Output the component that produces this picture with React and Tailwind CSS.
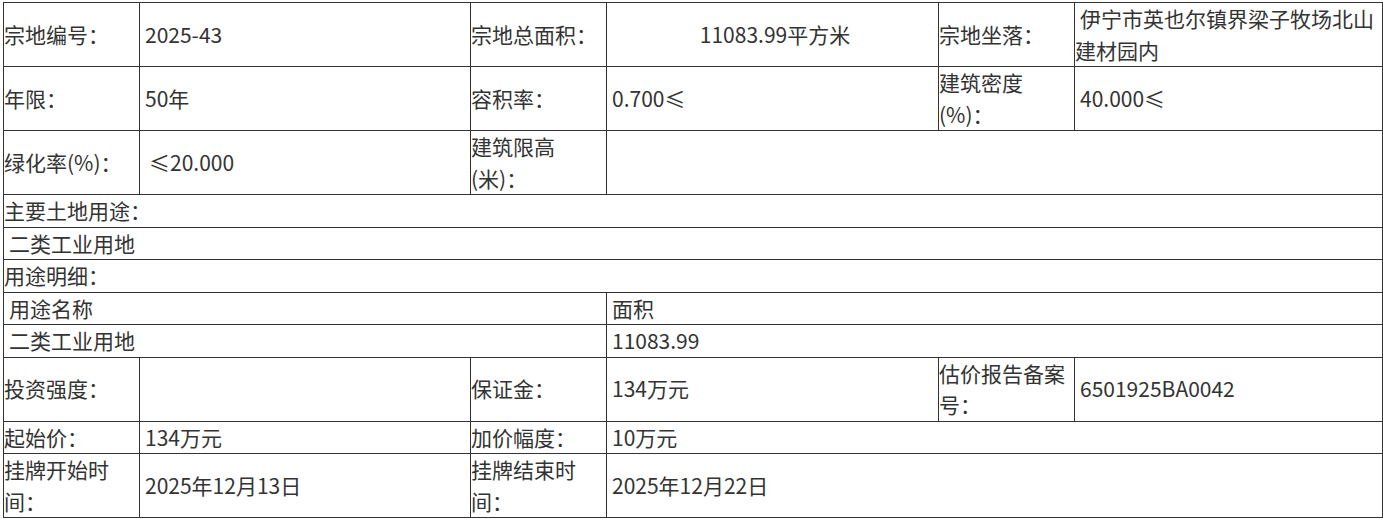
export default function App() {
  const L = "border border-[#333] p-0 align-middle text-left";
  const V = "border border-[#333] p-0 pl-[5px] align-middle text-left";
  return (
    <div className="bg-white w-[1383px] h-[519px] pl-[3px] pt-[2px] text-[#333] text-[21px] leading-[1.5]" style={{ fontFamily: '"Noto Sans CJK SC", "Noto Sans", sans-serif' }}>
      <table className="table-fixed border-collapse w-[1379px]">
        <colgroup>
          <col className="w-[136px]" />
          <col className="w-[331px]" />
          <col className="w-[136px]" />
          <col className="w-[332px]" />
          <col className="w-[136px]" />
          <col className="w-[308px]" />
        </colgroup>
        <tbody>
          <tr>
            <td className={L}>宗地编号：</td>
            <td className={V}>2025-43</td>
            <td className={L}>宗地总面积：</td>
            <td className="border border-[#333] p-0 pl-[5px] align-middle text-center">11083.99平方米</td>
            <td className={L}>宗地坐落：</td>
            <td className="border border-[#333] p-0 indent-[5px] align-middle text-left">伊宁市英也尔镇界梁子牧场北山建材园内</td>
          </tr>
          <tr>
            <td className={L}>年限：</td>
            <td className={V}>50年</td>
            <td className={L}>容积率：</td>
            <td className={V}>0.700≤</td>
            <td className={L}>建筑密度(%)：</td>
            <td className={V}>40.000≤</td>
          </tr>
          <tr>
            <td className={L}>绿化率(%)：</td>
            <td className="border border-[#333] p-0 pl-[9px] align-middle text-left">≤20.000</td>
            <td className={L}>建筑限高(米)：</td>
            <td className={V} colSpan={3}></td>
          </tr>
          <tr>
            <td className={L} colSpan={6}>主要土地用途：</td>
          </tr>
          <tr>
            <td className={V} colSpan={6}>二类工业用地</td>
          </tr>
          <tr>
            <td className={L} colSpan={6}>用途明细：</td>
          </tr>
          <tr>
            <td className={V} colSpan={3}>用途名称</td>
            <td className={V} colSpan={3}>面积</td>
          </tr>
          <tr>
            <td className={V} colSpan={3}>二类工业用地</td>
            <td className={V} colSpan={3}>11083.99</td>
          </tr>
          <tr>
            <td className={L}>投资强度：</td>
            <td className={V}></td>
            <td className={L}>保证金：</td>
            <td className={V}>134万元</td>
            <td className={L}>估价报告备案号：</td>
            <td className={V}>6501925BA0042</td>
          </tr>
          <tr>
            <td className={L}>起始价：</td>
            <td className={V}>134万元</td>
            <td className={L}>加价幅度：</td>
            <td className={V} colSpan={3}>10万元</td>
          </tr>
          <tr>
            <td className={L}>挂牌开始时间：</td>
            <td className={V}>2025年12月13日</td>
            <td className={L}>挂牌结束时间：</td>
            <td className={V} colSpan={3}>2025年12月22日</td>
          </tr>
        </tbody>
      </table>
    </div>
  );
}
